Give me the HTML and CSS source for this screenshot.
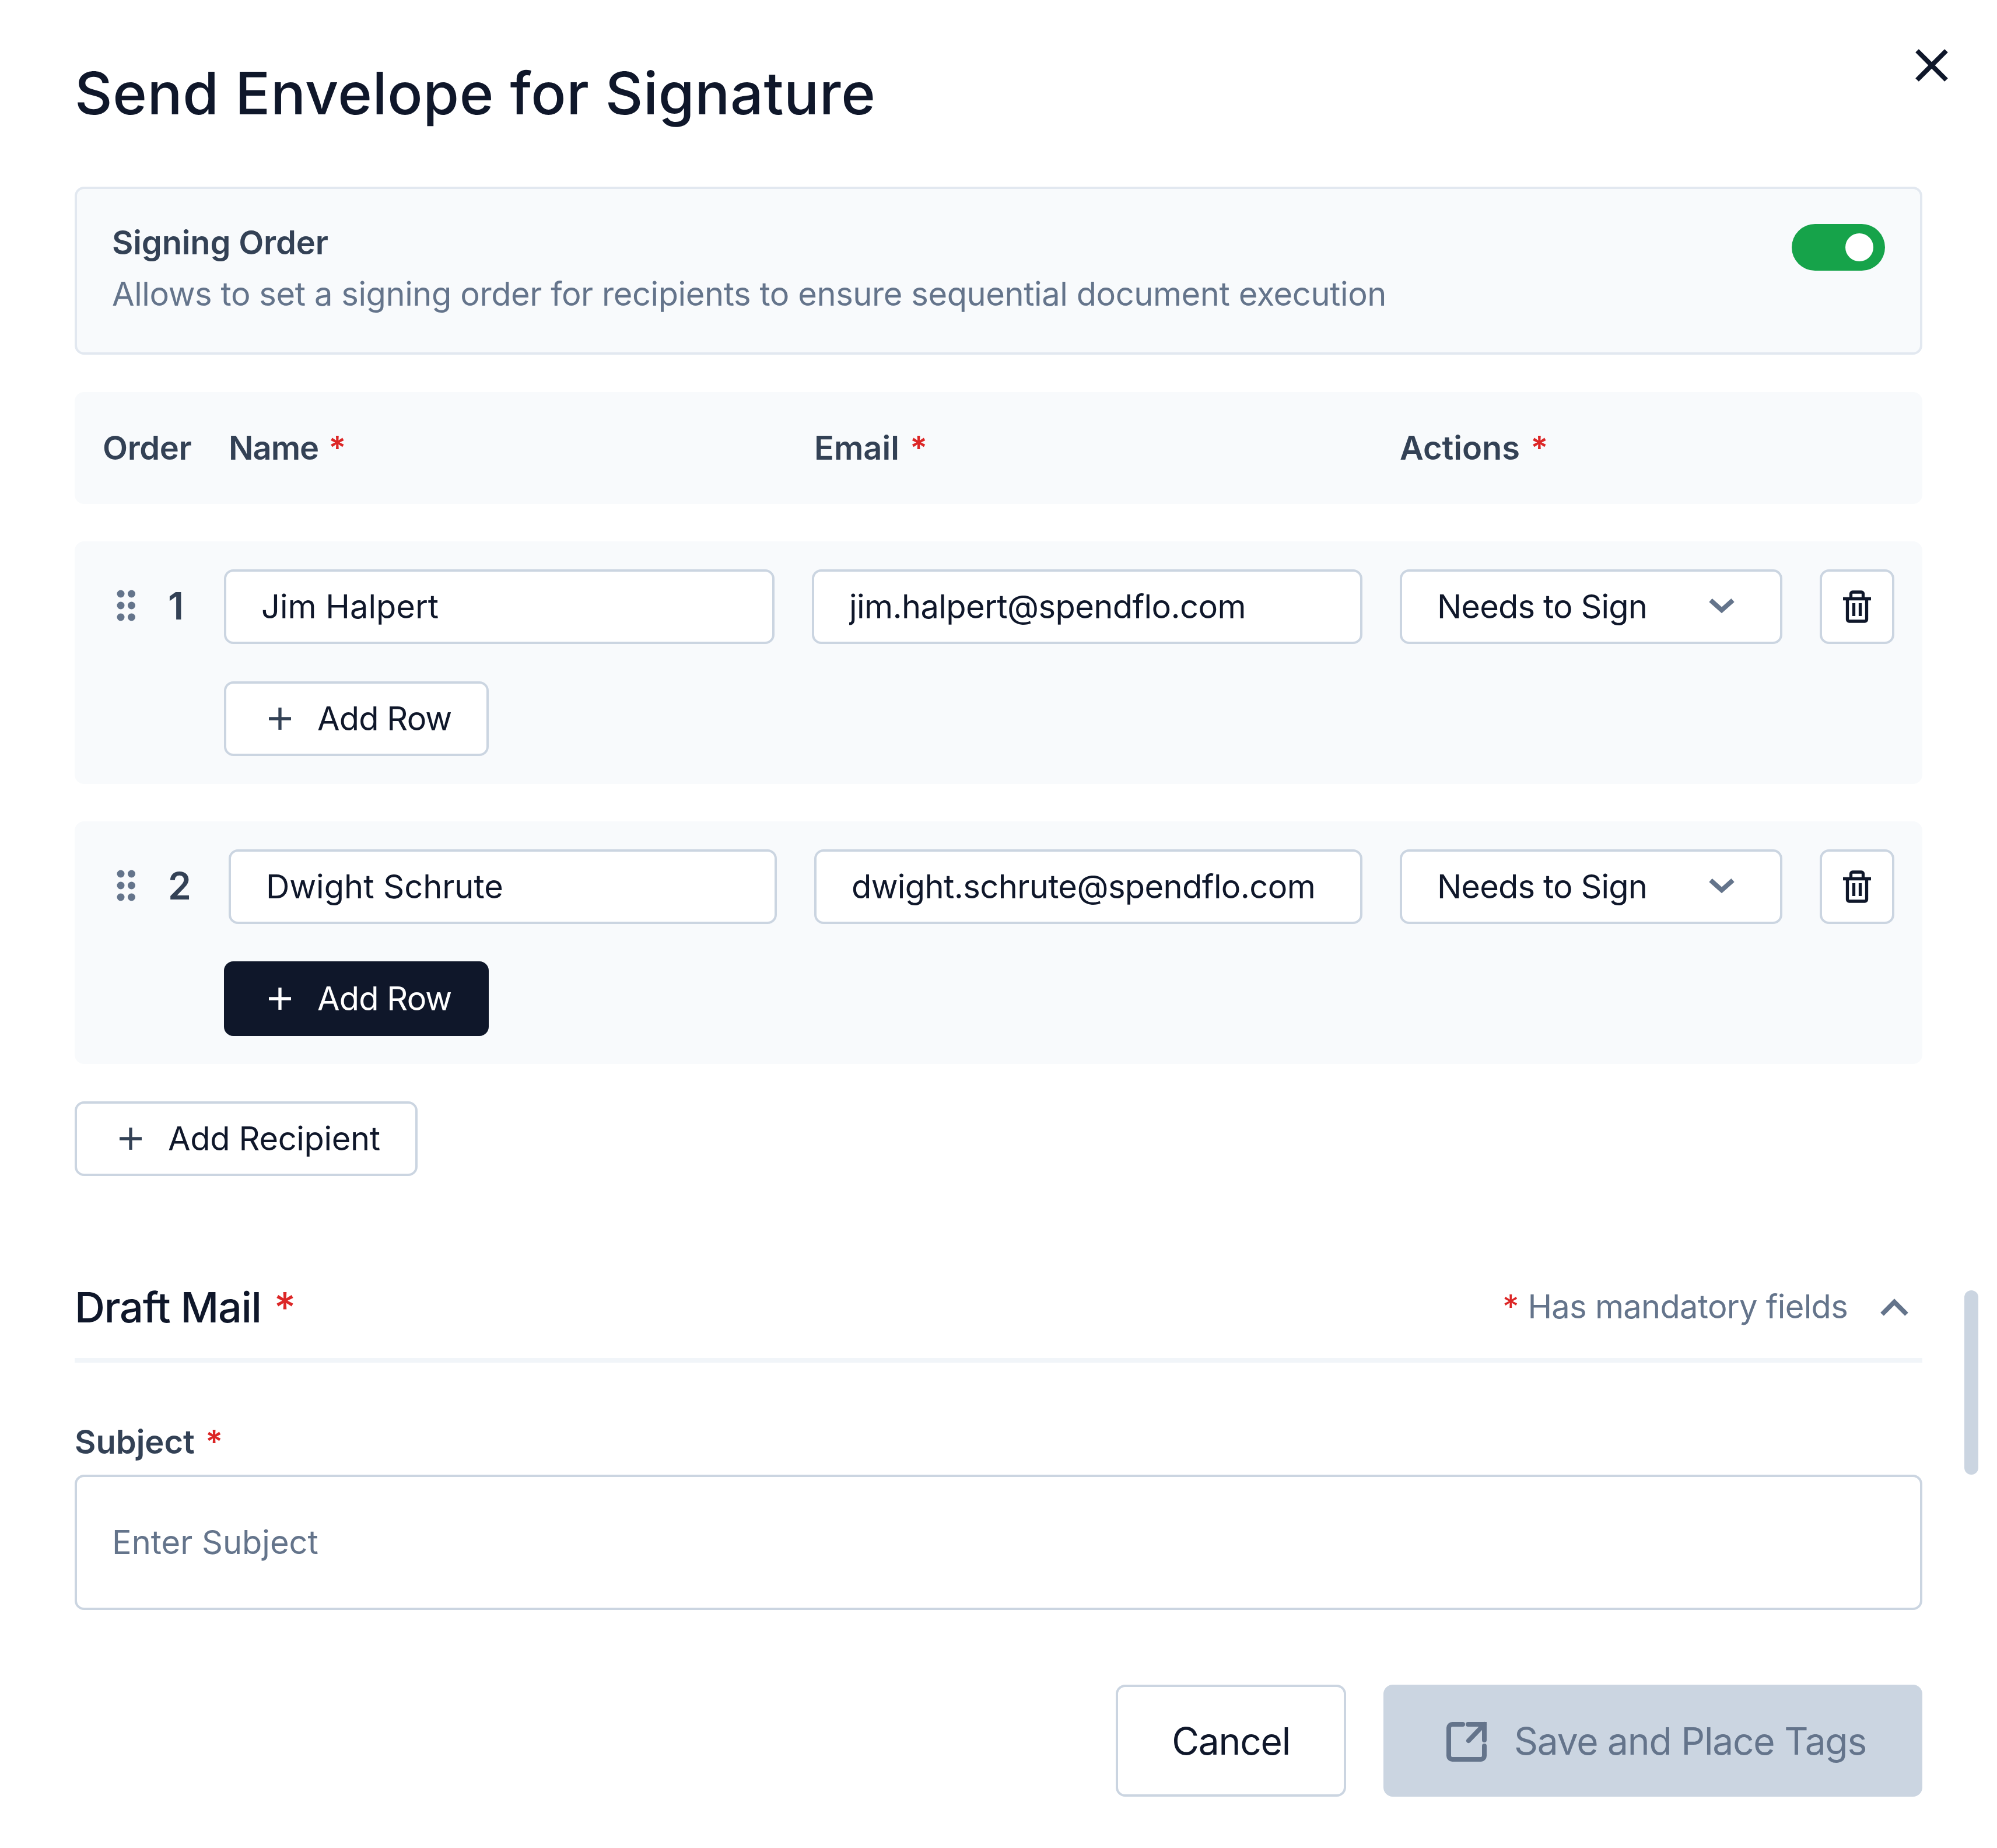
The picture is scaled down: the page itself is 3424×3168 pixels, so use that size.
FILE: index.html
```html
<!DOCTYPE html>
<html lang="en">
<head>
    <meta charset="UTF-8">
    <meta name="viewport" content="width=device-width, initial-scale=1.0">
    <title>Send Envelope for Signature</title>
    <link rel="stylesheet" href="styles.css">
</head>
<body>
    <div class="modal">
        <h1 class="modal-title">Send Envelope for Signature</h1>
        <svg class="close-icon" viewBox="0 0 64 64"><path d="M7 7L57 57M57 7L7 57"/></svg>

        <div class="signing-box">
            <div class="signing-text">
                <div class="signing-label">Signing Order</div>
                <div class="signing-desc">Allows to set a signing order for recipients to ensure sequential document execution</div>
            </div>
            <div class="toggle"><span class="toggle-knob"></span></div>
        </div>

        <div class="table-head">
            <div class="col-order">Order</div>
            <div class="col-field col-name">Name <span class="req">*</span></div>
            <div class="col-field">Email <span class="req">*</span></div>
            <div class="col-actions">Actions <span class="req">*</span></div>
        </div>

        <!-- recipient 1 -->
        <div class="recipient">
            <div class="recipient-main">
                <div class="order-cell">
                    <svg class="drag-icon" viewBox="0 0 80 80"><circle cx="31" cy="18" r="6.500"/><circle cx="49.500" cy="18" r="6.500"/><circle cx="31" cy="38" r="6.500"/><circle cx="49.500" cy="38" r="6.500"/><circle cx="31" cy="58" r="6.500"/><circle cx="49.500" cy="58" r="6.500"/></svg>
                    <span class="order-num">1</span>
                </div>
                <input class="field" type="text" value="Jim Halpert">
                <input class="field field-email" type="text" value="jim.halpert@spendflo.com">
                <div class="select">
                    <span>Needs to Sign</span>
                    <svg class="chevron" viewBox="0 0 64 64"><path d="M13 21L32 38L51 21"/></svg>
                </div>
                <div class="trash-btn">
                    <svg class="trash-icon" viewBox="0 0 64 64"><path d="M8 18.500H56M21.500 18V10a3 3 0 013-3H39.500a3 3 0 013 3V18M15.500 18V54a3 3 0 003 3H45.500a3 3 0 003-3V18M26.500 26V48M37.500 26V48"/></svg>
                </div>
            </div>
            <button class="btn add-row"><svg class="plus-icon" viewBox="0 0 64 64"><path d="M32 13V51M13 32H51"/></svg>Add Row</button>
        </div>

        <!-- recipient 2 -->
        <div class="recipient">
            <div class="recipient-main">
                <div class="order-cell">
                    <svg class="drag-icon" viewBox="0 0 80 80"><circle cx="31" cy="18" r="6.500"/><circle cx="49.500" cy="18" r="6.500"/><circle cx="31" cy="38" r="6.500"/><circle cx="49.500" cy="38" r="6.500"/><circle cx="31" cy="58" r="6.500"/><circle cx="49.500" cy="58" r="6.500"/></svg>
                    <span class="order-num">2</span>
                </div>
                <input class="field" type="text" value="Dwight Schrute">
                <input class="field field-email" type="text" value="dwight.schrute@spendflo.com">
                <div class="select">
                    <span>Needs to Sign</span>
                    <svg class="chevron" viewBox="0 0 64 64"><path d="M13 21L32 38L51 21"/></svg>
                </div>
                <div class="trash-btn">
                    <svg class="trash-icon" viewBox="0 0 64 64"><path d="M8 18.500H56M21.500 18V10a3 3 0 013-3H39.500a3 3 0 013 3V18M15.500 18V54a3 3 0 003 3H45.500a3 3 0 003-3V18M26.500 26V48M37.500 26V48"/></svg>
                </div>
            </div>
            <button class="btn add-row btn-dark"><svg class="plus-icon" viewBox="0 0 64 64"><path d="M32 13V51M13 32H51"/></svg>Add Row</button>
        </div>

        <button class="btn add-recipient"><svg class="plus-icon" viewBox="0 0 64 64"><path d="M32 13V51M13 32H51"/></svg>Add Recipient</button>

        <div class="draft-head">
            <div class="draft-title">Draft Mail <span class="req">*</span></div>
            <div class="draft-note">
                <span><span class="req">*</span> Has mandatory fields</span>
                <svg class="chevron-up" viewBox="0 0 80 80"><path d="M19 53L40 32L61 53"/></svg>
            </div>
        </div>

        <label class="subject-label" for="subject">Subject <span class="req">*</span></label>
        <input class="subject-input" id="subject" type="text" placeholder="Enter Subject">

        <div class="footer">
            <button class="footer-btn cancel">Cancel</button>
            <button class="footer-btn save">
                <svg class="open-icon" viewBox="0 0 96 96"><path d="M40 20H22a6 6 0 00-6 6V74a6 6 0 006 6H71a6 6 0 006-6V57M49 20H77V47M77 20L50 48"/></svg>
                Save and Place Tags
            </button>
        </div>

        <div class="scroll-thumb"></div>
    </div>
</body>
</html>
```

FILE: styles.css
```css
* {
    box-sizing: border-box;
}
body {
    margin: 0;
    background-color: #fff;
    font-family: Inter, "Liberation Sans", sans-serif;
    font-size: 56px;
    color: #0f172a;
}
.modal {
    position: relative;
    width: 3424px;
    height: 3168px;
    padding: 96px 128px 0;
    overflow: hidden;
}
.modal-title {
    margin: 0 0 96px;
    font-size: 100px;
    line-height: 128px;
    font-weight: 500;
    letter-spacing: 0.6px;
}
.close-icon {
    position: absolute;
    left: 3280px;
    top: 80px;
    width: 64px;
    height: 64px;
    fill: none;
    stroke: #0f172a;
    stroke-width: 8;
}
.req {
    margin-left: 4px;
    color: #dc2626;
    letter-spacing: 0;
}

/* signing order box */
.signing-box {
    display: flex;
    justify-content: space-between;
    align-items: flex-start;
    height: 288px;
    padding: 60px;
    margin-bottom: 64px;
    background-color: #f8fafc;
    border: 4px solid #e2e8f0;
    border-radius: 16px;
}
.signing-label {
    font-weight: 600;
    line-height: 64px;
    color: #334155;
    margin-bottom: 16px;
    letter-spacing: -0.15px;
}
.signing-desc {
    line-height: 80px;
    color: #64748b;
    letter-spacing: -0.42px;
}
.toggle {
    display: flex;
    justify-content: flex-end;
    align-items: center;
    width: 160px;
    height: 80px;
    padding-right: 20px;
    background-color: #16a34a;
    border-radius: 40px;
}
.toggle-knob {
    width: 48px;
    height: 48px;
    background-color: #fff;
    border-radius: 50%;
}

/* table */
.table-head {
    display: flex;
    align-items: center;
    gap: 64px;
    height: 192px;
    padding: 0 48px;
    margin-bottom: 64px;
    background-color: #f8fafc;
    border-radius: 16px;
    font-weight: 600;
    color: #334155;
}
.col-order {
    width: 152px;
    letter-spacing: -0.4px;
}
.col-field {
    flex: 1;
}
.col-name {
    letter-spacing: -1px;
}
.col-actions {
    width: 848px;
}
.recipient {
    display: flex;
    flex-direction: column;
    align-items: flex-start;
    gap: 64px;
    padding: 48px;
    margin-bottom: 64px;
    background-color: #f8fafc;
    border-radius: 16px;
}
.recipient-main {
    display: flex;
    align-items: center;
    gap: 64px;
    width: 100%;
}
.order-cell {
    display: flex;
    align-items: center;
    gap: 32px;
}
.drag-icon {
    width: 80px;
    height: 80px;
    fill: #64748b;
}
.order-num {
    min-width: 32px;
    margin-bottom: 4px;
    font-size: 64px;
    font-weight: 600;
    color: #334155;
}
.field {
    flex: 1;
    min-width: 0;
    height: 128px;
    padding: 0 60px;
    background-color: #fff;
    border: 4px solid #cbd5e1;
    border-radius: 16px;
    font-family: inherit;
    font-size: 56px;
    color: #0f172a;
}
.field-email {
    letter-spacing: -0.6px;
}
.select {
    display: flex;
    justify-content: space-between;
    align-items: center;
    flex: none;
    width: 656px;
    height: 128px;
    padding: 0 68px 0 60px;
    background-color: #fff;
    border: 4px solid #cbd5e1;
    border-radius: 16px;
    letter-spacing: -0.85px;
}
.chevron {
    width: 64px;
    height: 64px;
    fill: none;
    stroke: #64748b;
    stroke-width: 8;
}
.trash-btn {
    display: flex;
    justify-content: center;
    align-items: center;
    flex: none;
    width: 128px;
    height: 128px;
    background-color: #fff;
    border: 4px solid #cbd5e1;
    border-radius: 16px;
}
.trash-icon {
    width: 64px;
    height: 64px;
    fill: none;
    stroke: #0f172a;
    stroke-width: 5.300;
}

/* buttons */
.btn {
    display: inline-flex;
    align-items: center;
    gap: 32px;
    height: 128px;
    padding: 0 60px;
    background-color: #fff;
    border: 4px solid #cbd5e1;
    border-radius: 16px;
    font-family: inherit;
    font-size: 56px;
    color: #0f172a;
}
.plus-icon {
    width: 64px;
    height: 64px;
    fill: none;
    stroke: #334155;
    stroke-width: 5.300;
}
.add-row {
    margin-left: 208px;
    letter-spacing: -0.9px;
}
.add-recipient {
    letter-spacing: -0.35px;
}
.btn-dark {
    background-color: #0f172a;
    border-color: #0f172a;
    color: #fff;
}
.btn-dark .plus-icon {
    stroke: #fff;
}

/* draft mail */
.draft-head {
    display: flex;
    justify-content: space-between;
    align-items: center;
    height: 184px;
    margin-top: 136px;
    margin-bottom: 96px;
    border-bottom: 8px solid #f1f5f9;
}
.draft-title {
    font-size: 72px;
    font-weight: 500;
    letter-spacing: -1.2px;
}
.draft-note {
    display: flex;
    align-items: center;
    gap: 40px;
    padding-right: 8px;
    color: #64748b;
    letter-spacing: -0.7px;
}
.chevron-up {
    width: 80px;
    height: 80px;
    fill: none;
    stroke: #64748b;
    stroke-width: 8;
}
.subject-label {
    display: block;
    margin-bottom: 16px;
    line-height: 80px;
    font-weight: 600;
    color: #334155;
}
.subject-input {
    display: block;
    width: 100%;
    height: 232px;
    padding: 0 60px;
    background-color: #fff;
    border: 4px solid #cbd5e1;
    border-radius: 16px;
    font-family: inherit;
    font-size: 56px;
}
.subject-input::placeholder {
    color: #64748b;
    opacity: 1;
}

/* footer */
.footer {
    display: flex;
    justify-content: flex-end;
    gap: 64px;
    margin-top: 128px;
}
.footer-btn {
    display: inline-flex;
    align-items: center;
    height: 192px;
    padding: 0 92px;
    border: 4px solid #cbd5e1;
    border-radius: 16px;
    font-family: inherit;
    font-size: 64px;
    letter-spacing: -1.2px;
}
.cancel {
    background-color: #fff;
    color: #0f172a;
}
.save {
    gap: 32px;
    background-color: #cbd5e1;
    color: #64748b;
}
.open-icon {
    width: 96px;
    height: 96px;
    fill: none;
    stroke: #64748b;
    stroke-width: 8;
    stroke-linecap: round;
}
.scroll-thumb {
    position: absolute;
    left: 3368px;
    top: 2212px;
    width: 24px;
    height: 316px;
    background-color: #cbd5e1;
    border-radius: 12px;
}
```
